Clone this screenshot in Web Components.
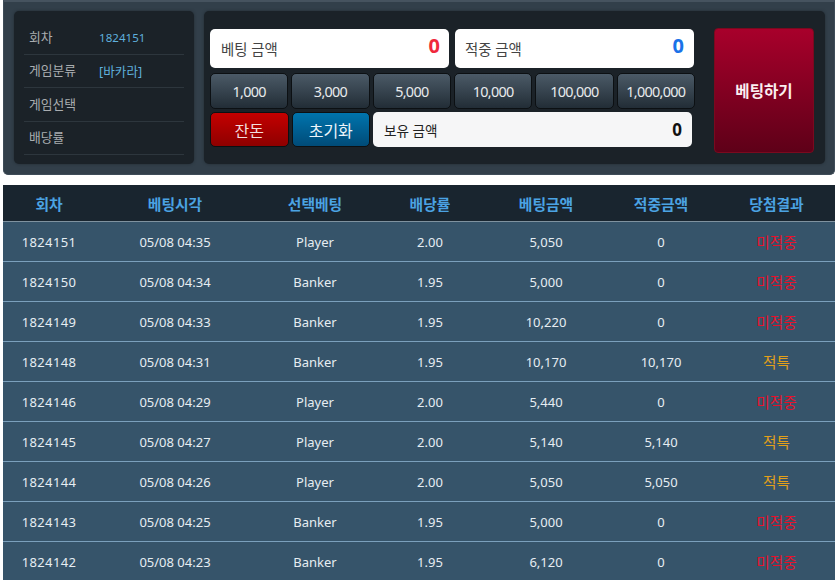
<!DOCTYPE html>
<html lang="ko"><head><meta charset="utf-8"><title>베팅</title>
<style>
html,body{margin:0;padding:0;height:580px;overflow:hidden;background:#fff}
body{font-family:"Noto Sans","Noto Sans CJK KR",sans-serif;font-size:13px}
.page{display:flex;flex-direction:column;gap:10px;padding-left:3px;width:832px}
</style></head><body>
<div class="page">
<bet-panel>
  <info-list slot="info">
    <info-row label="회차" value="1824151"></info-row>
    <info-row label="게임분류" value="[바카라]" wide></info-row>
    <info-row label="게임선택"></info-row>
    <info-row label="배당률"></info-row>
  </info-list>
  <amount-field slot="bet" label="베팅 금액" value="0" color="#f0283c"></amount-field>
  <amount-field slot="win" label="적중 금액" value="0" color="#1a72e8"></amount-field>
  <chip-button slot="chips">1,000</chip-button>
  <chip-button slot="chips">3,000</chip-button>
  <chip-button slot="chips">5,000</chip-button>
  <chip-button slot="chips">10,000</chip-button>
  <chip-button slot="chips">100,000</chip-button>
  <chip-button slot="chips">1,000,000</chip-button>
  <chip-button slot="actions" tone="red">잔돈</chip-button>
  <chip-button slot="actions" tone="blue">초기화</chip-button>
  <amount-field slot="balance" label="보유 금액" value="0" color="#111" small></amount-field>
  <bet-button slot="submit">베팅하기</bet-button>
</bet-panel>
<history-table></history-table>
</div>
<script>
function make(name,css,html,extra){
  customElements.define(name,class extends HTMLElement{
    constructor(){super();const s=this.attachShadow({mode:"open"});s.innerHTML="<style>"+css+"</style>"+html;}
    connectedCallback(){if(extra)extra.call(this,this.shadowRoot);}
  });
}
const COLS="grid-template-columns:92px 160px 120px 110px 122px 108px 120px;";
make("bet-panel",`
:host{display:block;height:175px;box-sizing:border-box;background:#323f4a;border-radius:0 0 5px 5px;border:1px solid #3e4c58;border-top:2px solid #46535f;padding:9px 9px 0 10px}
.wrap{display:flex;gap:10px;height:153px}
.left{width:180px;background:#1b2228;border-radius:5px;box-shadow:0 0 3px #222b32;box-sizing:border-box;padding:10px 10px 9px}
.right{flex:1;background:#1b2228;border-radius:5px;box-shadow:0 0 3px #222b32;display:flex;box-sizing:border-box;padding:18px 10px 0 6px}
.main{width:484px;display:flex;flex-direction:column}
.top{display:flex;gap:6px;width:484px;height:39px}
.top ::slotted(*){flex:1}
.top ::slotted([slot=win]){padding:0 10px}
.chips{display:flex;gap:3px;margin-top:5px;width:485px}
.chips ::slotted(*){flex:1 1 0;height:36px}
.bottom{display:flex;gap:3px;margin-top:3px;height:35px}
.bottom ::slotted(chip-button){width:78.5px;flex:none}
.bottom ::slotted(amount-field){width:319px;flex:none}
.side{margin:-1px 0 0 20px}
`,`<div class="wrap"><div class="left"><slot name="info"></slot></div>
<div class="right"><div class="main"><div class="top"><slot name="bet"></slot><slot name="win"></slot></div>
<div class="chips"><slot name="chips"></slot></div>
<div class="bottom"><slot name="actions"></slot><slot name="balance"></slot></div></div>
<div class="side"><slot name="submit"></slot></div></div></div>`);
make("info-list",`:host{display:flex;flex-direction:column}`,`<slot></slot>`);
make("info-row",`
:host{display:flex;align-items:center;height:33.5px;border-bottom:1px solid #2d363d;box-sizing:border-box;color:#a9adb0;font-size:12.8px;padding-left:5px}
.l{width:70px;margin-top:-2px}.v{color:#5fb0dd;font-size:11.5px;letter-spacing:.05px}
:host([wide]) .v{font-size:12.6px}
`,`<span class="l"></span><span class="v"></span>`,function(s){
  s.querySelector(".l").textContent=this.getAttribute("label");
  s.querySelector(".v").textContent=this.getAttribute("value")||"";
});
make("amount-field",`
:host{display:flex;align-items:center;justify-content:space-between;background:#fff;border-radius:5px;box-sizing:border-box;padding:0 9px 0 11px;color:#444;font-size:14.4px}
:host([small]){background:#f6f6f7;color:#222;font-size:13.6px;padding:0 10px 0 11px}
b{font-size:20px;font-weight:700;line-height:1;margin-top:-5px}
:host([small]) b{font-size:17px;margin-top:0}
`,`<span class="l"></span><b></b>`,function(s){
  s.querySelector(".l").textContent=this.getAttribute("label");
  const b=s.querySelector("b");b.textContent=this.getAttribute("value");b.style.color=this.getAttribute("color");
});
make("chip-button",`
:host{display:flex;align-items:center;justify-content:center;box-sizing:border-box;border:1px solid #0c1013;border-radius:5px;background:linear-gradient(#4b5a67,#222d36);color:#e8eaec;font-size:14.4px;letter-spacing:-.7px;white-space:nowrap}
:host([tone=red]){background:linear-gradient(#c40000,#8e0000);font-size:16px;letter-spacing:0;color:#f3dede}
:host([tone=blue]){background:linear-gradient(#0074ad,#004b78);font-size:16px;letter-spacing:0;color:#eef5fa}
`,`<slot></slot>`);
make("bet-button",`
:host{display:flex;align-items:center;justify-content:center;width:100px;height:125px;box-sizing:border-box;border:1px solid #7a0a1e;border-radius:4px;background:linear-gradient(#a8002b,#5e0018);color:#fbeef0;font-size:15.6px;font-weight:700}
`,`<slot></slot>`);
make("history-row",`
:host{display:grid;`+COLS+`height:40px;box-sizing:border-box;align-items:center;text-align:center;background:#36546a;border-bottom:1px solid #7ba0bc;color:#e6edf2;font-size:13px}
span:nth-child(1){font-size:13.7px}
span:nth-child(2){font-size:13px;letter-spacing:.38px}
.r,.g{font-size:14.6px;padding-left:3px}
.r{color:#e8112a}.g{color:#e3a019}
`,`<span></span><span></span><span></span><span></span><span></span><span></span><span></span>`,function(s){
  const d=JSON.parse(this.getAttribute("data"));
  const c=s.querySelectorAll("span");
  c.forEach((e,i)=>{e.textContent=d[i];});
  c[6].className=d[6]==="적특"?"g":"r";
});
make("history-table",`
:host{display:block}
.h{display:grid;`+COLS+`height:37px;align-items:center;text-align:center;background:#19252f;border-bottom:1px solid #7f929f;box-sizing:border-box;color:#4ba3e3;font-size:14.8px;font-weight:700}
.h span:last-child{padding-left:3px}
`,`<div class="h"><span>회차</span><span>베팅시각</span><span>선택베팅</span><span>배당률</span><span>베팅금액</span><span>적중금액</span><span>당첨결과</span></div><div class="b"></div>`,function(s){
  const rows=[["1824151","05/08 04:35","Player","2.00","5,050","0","미적중"],
  ["1824150","05/08 04:34","Banker","1.95","5,000","0","미적중"],
  ["1824149","05/08 04:33","Banker","1.95","10,220","0","미적중"],
  ["1824148","05/08 04:31","Banker","1.95","10,170","10,170","적특"],
  ["1824146","05/08 04:29","Player","2.00","5,440","0","미적중"],
  ["1824145","05/08 04:27","Player","2.00","5,140","5,140","적특"],
  ["1824144","05/08 04:26","Player","2.00","5,050","5,050","적특"],
  ["1824143","05/08 04:25","Banker","1.95","5,000","0","미적중"],
  ["1824142","05/08 04:23","Banker","1.95","6,120","0","미적중"]];
  const b=s.querySelector(".b");
  rows.forEach(r=>{const e=document.createElement("history-row");e.setAttribute("data",JSON.stringify(r));b.appendChild(e);});
});
</script>
</body></html>
